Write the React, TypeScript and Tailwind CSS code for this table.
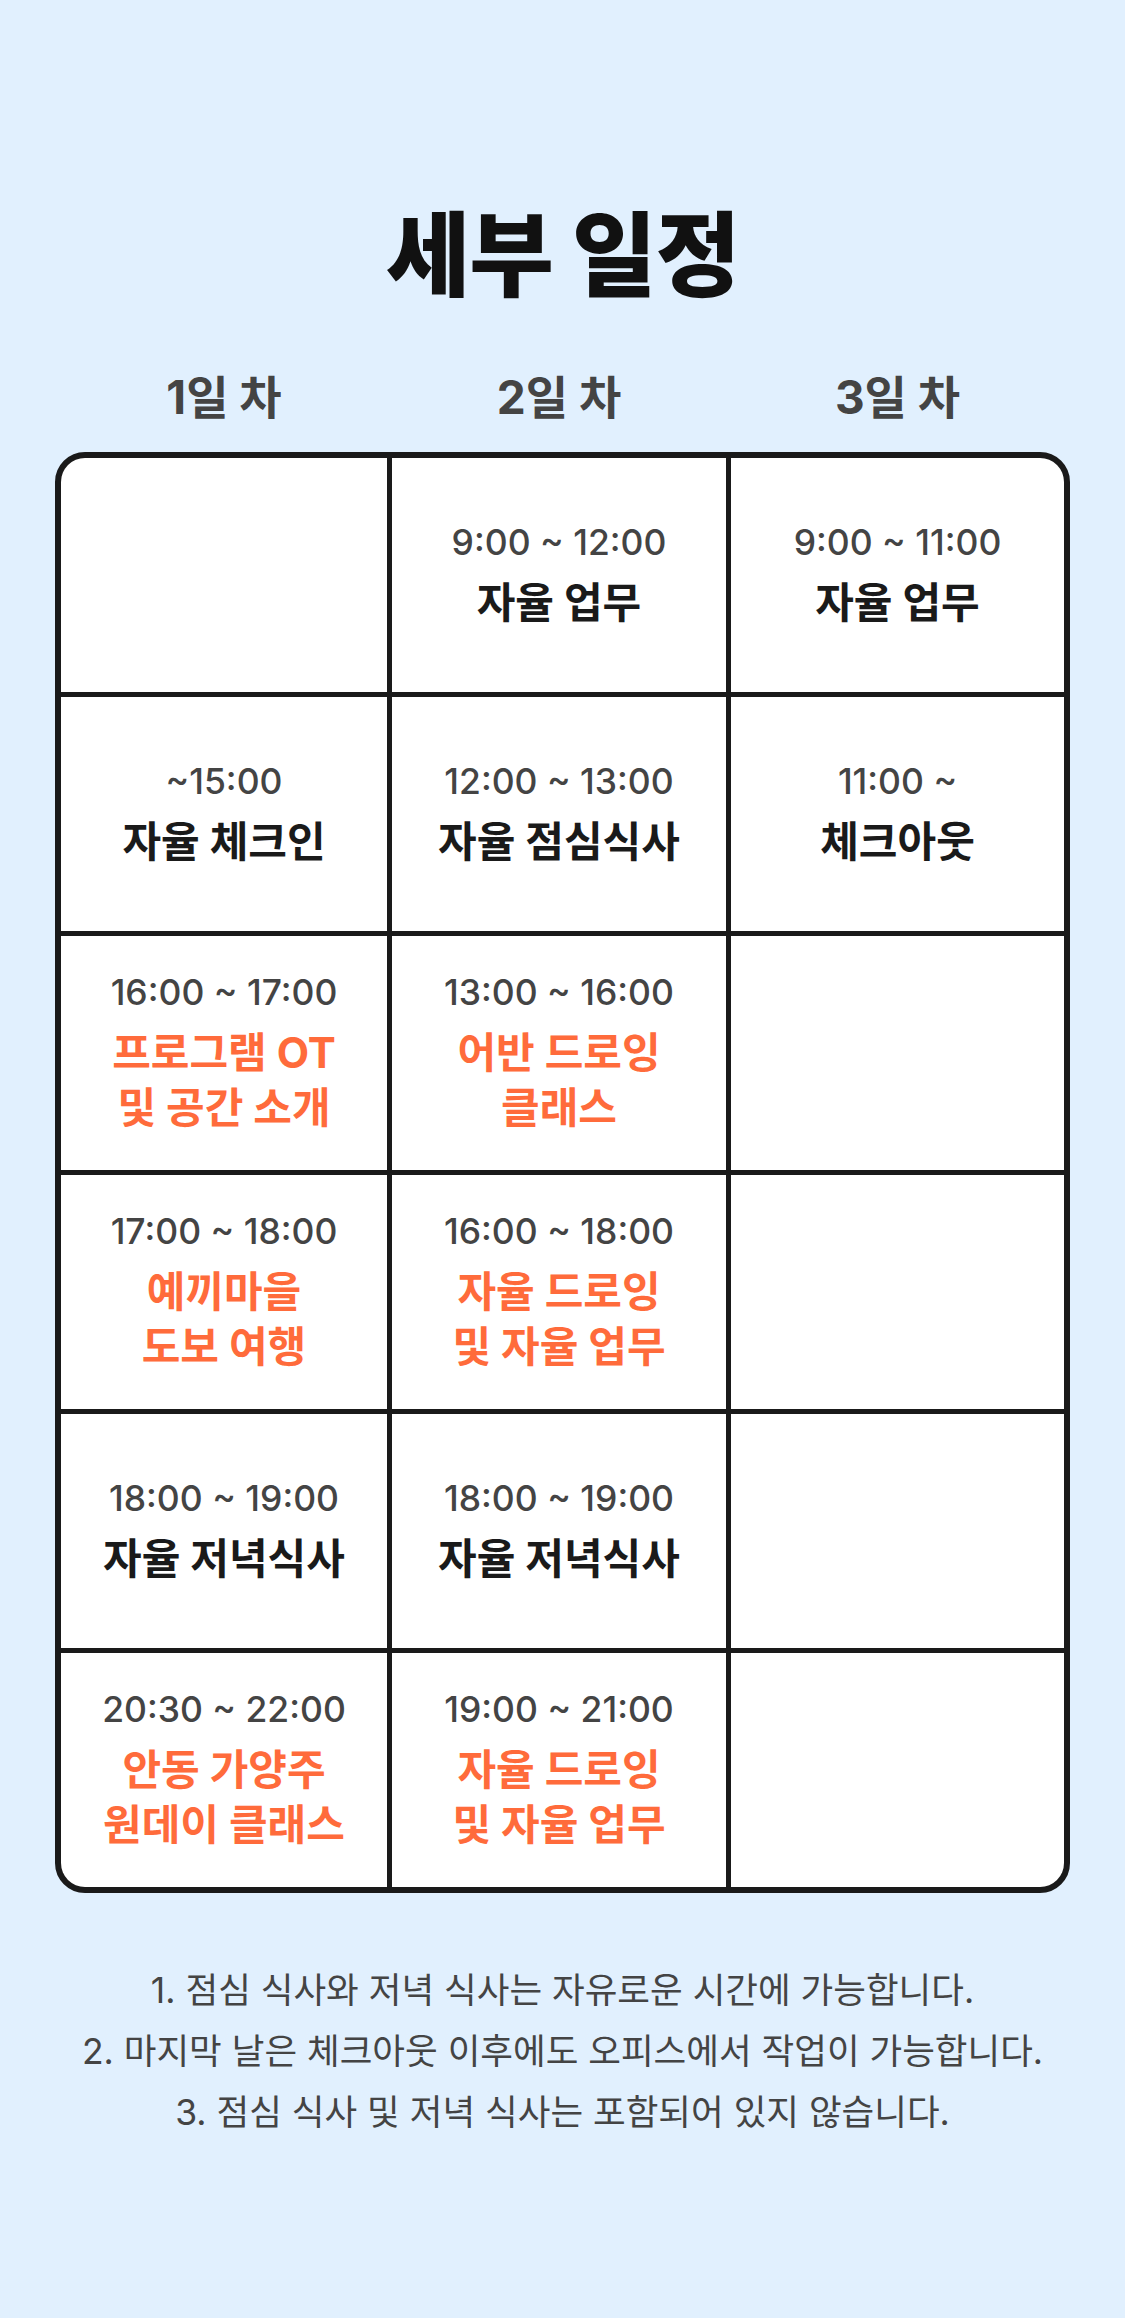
type Cell = { time?: string; lines?: string[]; accent?: boolean };

const days = ['1일 차', '2일 차', '3일 차'];

// rows x columns
const schedule: Cell[][] = [
  [{}, { time: '9:00 ~ 12:00', lines: ['자율 업무'] }, { time: '9:00 ~ 11:00', lines: ['자율 업무'] }],
  [
    { time: '~15:00', lines: ['자율 체크인'] },
    { time: '12:00 ~ 13:00', lines: ['자율 점심식사'] },
    { time: '11:00 ~', lines: ['체크아웃'] },
  ],
  [
    { time: '16:00 ~ 17:00', lines: ['프로그램 OT', '및 공간 소개'], accent: true },
    { time: '13:00 ~ 16:00', lines: ['어반 드로잉', '클래스'], accent: true },
    {},
  ],
  [
    { time: '17:00 ~ 18:00', lines: ['예끼마을', '도보 여행'], accent: true },
    { time: '16:00 ~ 18:00', lines: ['자율 드로잉', '및 자율 업무'], accent: true },
    {},
  ],
  [
    { time: '18:00 ~ 19:00', lines: ['자율 저녁식사'] },
    { time: '18:00 ~ 19:00', lines: ['자율 저녁식사'] },
    {},
  ],
  [
    { time: '20:30 ~ 22:00', lines: ['안동 가양주', '원데이 클래스'], accent: true },
    { time: '19:00 ~ 21:00', lines: ['자율 드로잉', '및 자율 업무'], accent: true },
    {},
  ],
];

const notes = [
  '1. 점심 식사와 저녁 식사는 자유로운 시간에 가능합니다.',
  '2. 마지막 날은 체크아웃 이후에도 오피스에서 작업이 가능합니다.',
  '3. 점심 식사 및 저녁 식사는 포함되어 있지 않습니다.',
];

export default function App() {
  return (
    <div
      className="min-h-screen bg-[#e1f0fe] flex flex-col items-center pt-[201px] pb-10"
      style={{ fontFamily: 'Inter, "Noto Sans CJK KR", sans-serif' }}
    >
      <h1 className="text-[92px] leading-[110px] font-extrabold text-[#111111] tracking-[-1px]">세부 일정</h1>

      <div className="w-[1015px] grid grid-cols-[326px_334px_333px] gap-[5px] mt-[56px] px-[6px]">
        {days.map(d => (
          <div key={d} className="text-center text-[46px] leading-[60px] font-bold text-[#444444]">
            {d}
          </div>
        ))}
      </div>

      {/* Schedule table */}
      <div className="mt-[25px] w-[1015px] rounded-[30px] border-[6px] border-[#1a1a1a] bg-[#1a1a1a] overflow-hidden">
        <div className="grid grid-cols-[326px_334px_333px] gap-[5px]">
          {schedule.flat().map((c, i) => (
            <div key={i} className="bg-white h-[234px] flex flex-col items-center justify-center text-center">
              {c.time && (
                <div className="text-[35.5px] leading-[44px] font-medium text-[#444444]">{c.time}</div>
              )}
              {c.lines && (
                <div className={`mt-[10px] text-[42px] leading-[55px] font-bold ${c.accent ? 'text-[#ff6b3b]' : 'text-[#1a1a1a]'}`}>
                  {c.lines.map(l => (
                    <div key={l}>{l}</div>
                  ))}
                </div>
              )}
            </div>
          ))}
        </div>
      </div>

      <div className="mt-[67px] text-center text-[35.5px] leading-[61px] text-[#444444]">
        {notes.map(n => (
          <p key={n}>{n}</p>
        ))}
      </div>
    </div>
  );
}
